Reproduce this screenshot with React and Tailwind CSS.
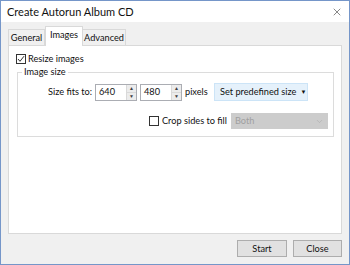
import { ChevronDown, X } from 'lucide-react';

const font = { fontFamily: 'Lato, "Liberation Sans", sans-serif' };

const Spin = ({ value }) => (
  <div className="flex h-[17px] w-[42px] shrink-0 border border-[#abadb3] bg-white">
    <div className="flex flex-1 items-center pl-[3px]">{value}</div>
    <div className="flex w-[10px] flex-col border-l border-[#d9d9d9]">
      <div className="flex flex-1 items-center justify-center border-b border-[#d9d9d9] bg-[#ececec] text-[5px] leading-none text-[#404040]">▲</div>
      <div className="flex flex-1 items-center justify-center bg-[#ececec] text-[5px] leading-none text-[#404040]">▼</div>
    </div>
  </div>
);

const Check = ({ checked }) => (
  <div className="flex h-[10px] w-[10px] shrink-0 items-center justify-center border border-[#333] bg-white">
    {checked && (
      <svg width="8" height="8" viewBox="0 0 8 8">
        <path d="M1 4 L3 6.3 L7 1.2" fill="none" stroke="#333" strokeWidth="1" />
      </svg>
    )}
  </div>
);

export default function App() {
  return (
    <div
      className="flex h-[265px] w-[350px] flex-col whitespace-nowrap border border-[#7596c9] bg-[#f0f0f0] text-[9.2px] leading-[12px] text-[#111]"
      style={font}
    >
      {/* Title bar */}
      <div className="flex h-[21px] items-center justify-between bg-white pl-[6px] pr-[6px]">
        <span className="text-[11px]">Create Autorun Album CD</span>
        <X size={12} strokeWidth={1} />
      </div>

      <div className="flex flex-1 flex-col px-[7px] pt-[3px]">
        {/* Tabs */}
        <div className="flex h-[20px] items-end">
          <div className="flex h-[16px] w-[37px] items-center justify-center border border-b-0 border-[#d9d9d9]">General</div>
          <div className="relative z-10 -mb-px flex h-[20px] w-[38px] items-center justify-center border border-b-0 border-[#d9d9d9] bg-white pb-[3px]">
            Images
          </div>
          <div className="flex h-[16px] w-[43px] items-center justify-center border border-b-0 border-l-0 border-[#d9d9d9]">Advanced</div>
        </div>

        {/* Panel */}
        <div className="h-[189px] w-[334px] border border-[#d9d9d9] bg-white px-[7px] pt-[7px]">
          <div className="flex h-[12px] items-center gap-[2px]">
            <Check checked />
            <span>Resize images</span>
          </div>

          <fieldset className="ml-[1px] mt-[1px] min-w-0 border border-[#dcdcdc] pb-[7px]">
            <legend className="ml-[4px] px-[2px]">Image size</legend>
            <div className="mt-[5px] flex h-[18px] items-center pl-[30px]">
              <span className="w-[47px]">Size fits to:</span>
              <Spin value="640" />
              <div className="w-[3px]" />
              <Spin value="480" />
              <span className="ml-[3px] w-[29px]">pixels</span>
              <div className="flex h-[18px] w-[94px] shrink-0 items-center border border-[#cce4f7] bg-[#e5f1fb] pl-[5px]">
                Set predefined size
                <span className="ml-[4px] text-[6px]">▼</span>
              </div>
            </div>
            <div className="mt-[12px] flex h-[16px] items-center pl-[131px]">
              <Check />
              <span className="ml-[3px] w-[69px]">Crop sides to fill</span>
              <div className="flex h-[16px] w-[97px] shrink-0 items-center justify-between bg-[#cccccc] pl-[4px] pr-[4px] text-[#a0a0a0]">
                Both
                <ChevronDown size={9} strokeWidth={1.2} />
              </div>
            </div>
          </fieldset>
        </div>

        {/* Buttons */}
        <div className="mt-[6px] flex justify-end gap-[6px]">
          <div className="flex h-[17px] w-[50px] items-center justify-center border border-[#adadad] bg-[#e1e1e1]">Start</div>
          <div className="flex h-[17px] w-[49px] items-center justify-center border border-[#adadad] bg-[#e1e1e1]">Close</div>
        </div>
      </div>
    </div>
  );
}
